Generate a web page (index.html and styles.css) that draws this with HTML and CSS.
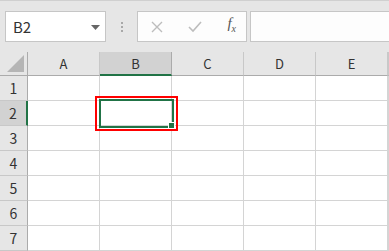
FILE: index.html
```html
<!DOCTYPE html>
<html lang="ja">
<head>
    <meta charset="UTF-8">
    <title>Sheet</title>
    <link rel="stylesheet" href="styles.css">
</head>
<body>
    <div class="toolbar">
        <div class="name-box">
            <span>B2</span>
            <svg class="drop" width="9" height="5" viewBox="0 0 9 5"><path d="M0 0h9L4.5 5z" fill="#666"/></svg>
        </div>
        <div class="dots"><i></i><i></i><i></i></div>
        <div class="fx-buttons">
            <svg width="12" height="12" viewBox="0 0 12 12"><path d="M1 1l10 10M11 1L1 11" stroke="#bdbdbd" stroke-width="1.4"/></svg>
            <svg width="14" height="12" viewBox="0 0 14 12"><path d="M1 6l4 4 8-9" stroke="#bdbdbd" stroke-width="1.6" fill="none"/></svg>
            <span class="fx">f<sub>x</sub></span>
        </div>
        <div class="formula"></div>
    </div>

    <div class="sheet">
        <div class="corner"><svg width="17" height="17" viewBox="0 0 17 17"><path d="M17 0v17H0z" fill="#b5b5b5"/></svg></div>
        <div class="col">A</div>
        <div class="col active">B</div>
        <div class="col">C</div>
        <div class="col">D</div>
        <div class="col">E</div>
        <div class="col"></div>

        <div class="row">1</div><div class="cell"></div><div class="cell"></div><div class="cell"></div><div class="cell"></div><div class="cell"></div><div class="cell"></div>
        <div class="row active">2</div><div class="cell"></div><div class="cell"></div><div class="cell"></div><div class="cell"></div><div class="cell"></div><div class="cell"></div>
        <div class="row">3</div><div class="cell"></div><div class="cell"></div><div class="cell"></div><div class="cell"></div><div class="cell"></div><div class="cell"></div>
        <div class="row">4</div><div class="cell"></div><div class="cell"></div><div class="cell"></div><div class="cell"></div><div class="cell"></div><div class="cell"></div>
        <div class="row">5</div><div class="cell"></div><div class="cell"></div><div class="cell"></div><div class="cell"></div><div class="cell"></div><div class="cell"></div>
        <div class="row">6</div><div class="cell"></div><div class="cell"></div><div class="cell"></div><div class="cell"></div><div class="cell"></div><div class="cell"></div>
        <div class="row">7</div><div class="cell"></div><div class="cell"></div><div class="cell"></div><div class="cell"></div><div class="cell"></div><div class="cell"></div>

        <div class="selection"><span class="handle"></span></div>
        <div class="highlight"></div>
    </div>
</body>
</html>
```

FILE: styles.css
```css
body {
    margin: 0;
    background: #fff;
    font-family: "Noto Sans CJK JP", "Noto Sans", sans-serif;
    overflow: hidden;
}

/* formula bar */
.toolbar {
    height: 52px;
    box-sizing: border-box;
    background: #e6e6e6;
    border-top: 1px solid #d0d0d0;
    display: flex;
    align-items: flex-start;
    padding: 10px 0 0 5px;
}

.name-box {
    width: 101px;
    height: 31px;
    box-sizing: border-box;
    background: #fff;
    border: 1px solid #c6c6c6;
    display: flex;
    align-items: center;
    justify-content: space-between;
    padding: 0 5px 0 7px;
    font-size: 15px;
    color: #333;
}

.name-box .drop {
    margin-top: 1px;
}

.dots {
    width: 31px;
    height: 31px;
    display: flex;
    flex-direction: column;
    align-items: center;
    justify-content: center;
    gap: 2px;
}

.dots i {
    width: 2px;
    height: 2px;
    background: #a8a8a8;
}

.fx-buttons {
    width: 110px;
    height: 31px;
    box-sizing: border-box;
    background: #fdfdfd;
    border: 1px solid #c6c6c6;
    display: flex;
    align-items: center;
    justify-content: space-between;
    padding: 0 10px 0 13px;
}

.fx {
    font-family: "Liberation Serif", serif;
    font-style: italic;
    font-size: 15px;
    color: #555;
    margin-top: -4px;
}

.fx sub {
    font-size: 10px;
}

.formula {
    flex: 1;
    height: 31px;
    margin-left: 3px;
    box-sizing: border-box;
    background: #fdfdfd;
    border: 1px solid #c6c6c6;
    border-right: none;
}

/* grid */
.sheet {
    position: relative;
    display: grid;
    grid-template-columns: 28px repeat(5, 72px) 1fr;
    grid-template-rows: 24px repeat(7, 25px);
}

.sheet > div {
    box-sizing: border-box;
}

.corner {
    background: #e6e6e6;
    border-right: 1px solid #ababab;
    border-bottom: 1px solid #ababab;
    display: flex;
    align-items: flex-end;
    justify-content: flex-end;
    padding: 0 3px 3px 0;
}

.col {
    background: #e6e6e6;
    border-right: 1px solid #c8c8c8;
    border-bottom: 1px solid #ababab;
    font-size: 13px;
    color: #333;
    display: flex;
    align-items: center;
    justify-content: center;
}

.col.active {
    background: #d2d2d2;
    border-bottom: 2px solid #217346;
    border-right-color: #ababab;
}

.row {
    background: #e6e6e6;
    border-right: 1px solid #ababab;
    border-bottom: 1px solid #c8c8c8;
    font-size: 14px;
    color: #333;
    display: flex;
    align-items: center;
    justify-content: center;
}

.row.active {
    background: #d2d2d2;
    border-right: 2px solid #217346;
}

.cell {
    border-right: 1px solid #d4d4d4;
    border-bottom: 1px solid #d4d4d4;
}

.selection {
    position: absolute;
    left: 99px;
    top: 47px;
    width: 75px;
    height: 29px;
    box-sizing: border-box;
    border: 2px solid #217346;
}

.handle {
    position: absolute;
    right: -3px;
    bottom: -3px;
    width: 5px;
    height: 5px;
    background: #217346;
    border: 1px solid #fff;
}

.highlight {
    position: absolute;
    left: 95px;
    top: 44px;
    width: 83px;
    height: 35px;
    box-sizing: border-box;
    border: 2px solid #f00;
}
```
